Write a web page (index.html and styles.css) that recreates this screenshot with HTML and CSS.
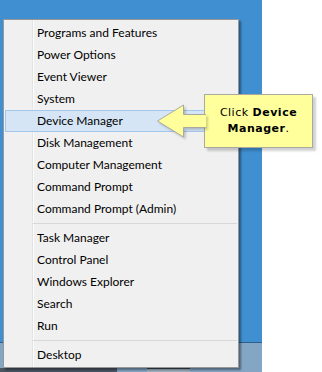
FILE: index.html
```html
<!DOCTYPE html>
<html>
	<head>
		<meta charset="utf-8">
		<title>Device Manager</title>
		<link rel="stylesheet" href="styles.css">
	</head>
	<body>
		<div class="screen">
			<div class="desktop">
				<div class="wallpaper"></div>
				<div class="taskbar">
					<div class="task-btn first"></div>
					<div class="task-btn second"></div>
				</div>
			</div>

			<!-- Win+X menu -->
			<ul class="menu">
				<li class="item">Programs and Features</li>
				<li class="item">Power Options</li>
				<li class="item">Event Viewer</li>
				<li class="item">System</li>
				<li class="item active">Device Manager</li>
				<li class="item">Disk Management</li>
				<li class="item">Computer Management</li>
				<li class="item">Command Prompt</li>
				<li class="item">Command Prompt (Admin)</li>
				<li class="sep"></li>
				<li class="item">Task Manager</li>
				<li class="item">Control Panel</li>
				<li class="item">Windows Explorer</li>
				<li class="item">Search</li>
				<li class="item">Run</li>
				<li class="sep"></li>
				<li class="item">Desktop</li>
			</ul>

			<!-- callout -->
			<div class="callout">
				<svg class="arrow" width="49" height="34" viewBox="0 0 49 34">
					<polygon points="49,10.5 26.5,10.5 26.5,1 0.5,17 26.5,33 26.5,23.5 49,23.5" fill="#ffff9c"/>
					<polyline points="49,10.5 26.5,10.5 26.5,1 0.5,17 26.5,33 26.5,23.5 49,23.5" fill="none" stroke="#a9a9a0" stroke-width="1"/>
				</svg>
				<div class="callout-box">
					<p>Click <b>Device</b></p>
					<p><b>Manager</b>.</p>
				</div>
			</div>
		</div>
	</body>
</html>
```

FILE: styles.css
```css
* {
	margin: 0;
	padding: 0;
}
body {
	background: #fff;
	font-family: Lato, "Noto Sans", sans-serif;
}
.screen {
	width: 322px;
	height: 372px;
	position: relative;
	overflow: hidden;
}
.desktop {
	width: 262px;
	height: 372px;
	display: flex;
	flex-direction: column;
}
.wallpaper {
	flex: 1;
	background: #3f8fd1;
}
.taskbar {
	height: 29px;
	border-top: 1px solid #2f5f8c;
	background: #84a6c5;
	display: flex;
	align-items: flex-end;
}
.task-btn {
	height: 4px;
}
.task-btn.first {
	width: 117px;
	background: #4b5664;
}
.task-btn.second {
	width: 43px;
	margin-left: 30px;
	height: 3px;
	border-top: 1px solid #3d4854;
	background: #9fb0c0;
}

/* menu */
.menu {
	position: absolute;
	left: 3px;
	top: 19px;
	width: 234px;
	list-style: none;
	padding: 2px 0 1px;
	border: 1px solid #979797;
	background: linear-gradient(to right, #f0f0f0 28px, #e2e3e3 28px, #e2e3e3 29px, #fcfcfc 29px, #fcfcfc 30px, #f0f0f0 30px);
	box-shadow: 2px 2px 2px rgba(0, 0, 0, 0.4);
	font-size: 12px;
	color: #000;
}
.item {
	height: 20px;
	line-height: 20px;
	margin: 0 1px;
	padding-left: 31px;
	border: 1px solid transparent;
	white-space: nowrap;
}
.item.active {
	background: #d5e5f6;
	border-color: #a3c8ee;
}
.sep {
	height: 1px;
	margin: 3px 1px 3px 29px;
	background: #d8d8d8;
}

/* callout */
.callout {
	position: absolute;
	left: 157px;
	top: 94px;
	display: flex;
	align-items: center;
}
.arrow {
	display: block;
	margin-right: -2px;
	position: relative;
	z-index: 1;
	filter: drop-shadow(2px 2px 1px rgba(0, 0, 0, 0.18));
}
.callout-box {
	width: 107px;
	height: 52px;
	border: 1px solid #a9a9a0;
	background: #ffff9c;
	box-shadow: 3px 3px 2px rgba(0, 0, 0, 0.18);
	display: flex;
	flex-direction: column;
	justify-content: center;
	align-items: center;
	font-family: "DejaVu Sans", Verdana, sans-serif;
	font-size: 11px;
	letter-spacing: 0.5px;
	line-height: 16px;
	color: #000;
}
```
